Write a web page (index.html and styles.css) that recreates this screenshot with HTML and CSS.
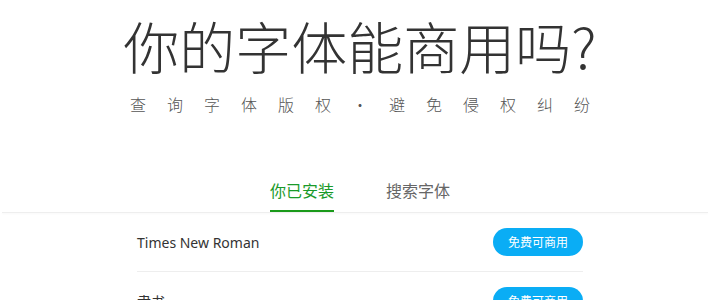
FILE: index.html
```html
<!DOCTYPE html>
<html>

<head>
    <meta charset="utf-8" />
    <title>你的字体能商用吗?</title>
    <meta name="viewport" content="width=device-width, initial-scale=1.0">
    <link rel="stylesheet" href="styles.css">
</head>

<body>
    <div class="main">
        <!-- Header -->
        <div class="title">你的字体能商用吗?</div>
        <div class="subtitle">查询字体版权·避免侵权纠纷</div>
        <!-- Tabs -->
        <div class="tabs">
            <span class="tab tab-active">你已安装</span>
            <span class="tab">搜索字体</span>
        </div>
    </div>
    <div class="divider"></div>
    <!-- Font list -->
    <div class="font-list">
        <div class="font-row">
            <span class="font-name">Times New Roman</span>
            <span class="badge">免费可商用</span>
        </div>
        <div class="font-row">
            <span class="font-name">隶书</span>
            <span class="badge">免费可商用</span>
        </div>
    </div>
</body>

</html>
```

FILE: styles.css
```css
* {
    padding: 0;
    margin: 0;
    box-sizing: border-box;
}

body {
    font-family: 'Noto Sans CJK SC', 'Noto Sans', sans-serif;
    color: #333;
    background: #fff;
    padding-left: 10px;
}

.main {
    text-align: center;
    padding-top: 11px;
}

.title {
    font-size: 56px;
    line-height: 68px;
    font-weight: 300;
    color: #333;
}

.subtitle {
    margin-top: 15px;
    font-size: 16px;
    line-height: 20px;
    font-weight: 300;
    color: #555;
    letter-spacing: 21px;
    padding-left: 21px;
}

.tabs {
    margin-top: 65px;
    display: flex;
    justify-content: center;
    gap: 52px;
}

.tab {
    font-size: 16px;
    line-height: 22px;
    padding-bottom: 9px;
    border-bottom: 2px solid transparent;
    color: #666;
}

.tab-active {
    color: #1a9a2a;
    border-bottom-color: #1a9a1a;
}

.divider {
    height: 1px;
    margin: 0 2px 0 -8px;
    background: #eee;
    box-shadow: 0 1px 2px rgba(0, 0, 0, 0.04);
}

.font-list {
    width: 446px;
    margin: 0 auto;
}

.font-row {
    display: flex;
    justify-content: space-between;
    align-items: center;
    height: 59px;
    border-bottom: 1px solid #eee;
}

.font-name {
    font-family: 'Noto Sans', 'Noto Sans CJK SC', sans-serif;
    font-size: 14px;
    color: #333;
}

.badge {
    width: 90px;
    height: 28px;
    line-height: 28px;
    border-radius: 14px;
    background: #0aadf5;
    color: #fff;
    font-size: 12px;
    text-align: center;
}
```
